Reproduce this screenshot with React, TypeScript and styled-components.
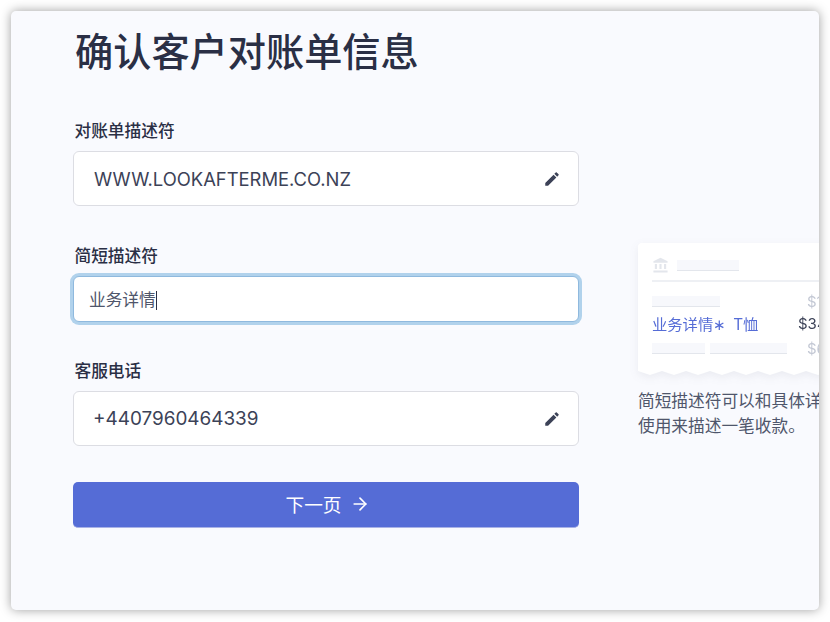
import React from 'react';
import styled, {createGlobalStyle} from 'styled-components';
import {MdAccountBalance, MdEdit} from 'react-icons/md';
import {ArrowRight} from 'lucide-react';

const FONT = `Inter, "Noto Sans CJK SC", sans-serif`;

const GlobalStyle = createGlobalStyle`
  html, body {
    margin: 0;
    padding: 0;
    background: #fff;
  }
  * {
    box-sizing: border-box;
  }
`;

const Page = styled.div`
  width: 830px;
  height: 622px;
  padding: 11px 11px 12px 11px;
  font-family: ${FONT};
  overflow: hidden;
`;

const Window = styled.main`
  width: 808px;
  height: 599px;
  border-radius: 5px;
  background: #f9fafe;
  box-shadow: 0 0 11px rgba(0, 0, 0, 0.38);
  display: flex;
  gap: 59px;
  padding-left: 62px;
  overflow: hidden;
`;

const FormColumn = styled.section`
  width: 506px;
  flex-shrink: 0;
  display: flex;
  flex-direction: column;
`;

const Title = styled.h1`
  margin: 16px 0 0 2px;
  height: 50px;
  font-size: 38.2px;
  line-height: 50px;
  font-weight: 500;
  color: #2a2f45;
`;

const Field = styled.div<{$gap: number}>`
  margin-top: ${p => p.$gap}px;
  display: flex;
  flex-direction: column;
`;

const Label = styled.label`
  height: 24px;
  margin-left: 1.5px;
  margin-bottom: 8px;
  font-size: 16.7px;
  line-height: 24px;
  font-weight: 500;
  color: #2a2f45;
`;

const InputBox = styled.div`
  height: 55px;
  background: #fff;
  border-radius: 6px;
  border: 1px solid #dcdde3;
  display: flex;
  align-items: center;
  justify-content: space-between;
  padding: 0 17px 0 20px;
  color: #3c4257;
`;

const FocusedInputBox = styled.div`
  height: 46px;
  background: #fff;
  border-radius: 6px;
  border: 1px solid #8fb9de;
  box-shadow: 0 0 0 3px #b1d2ec;
  display: flex;
  align-items: center;
  padding: 0 15px;
  font-size: 16.7px;
  color: #4f566b;
`;

const InputText = styled.span<{$size: number; $shift?: number}>`
  font-size: ${p => p.$size}px;
  margin-left: ${p => p.$shift ?? 0}px;
`;

const Caret = styled.span`
  display: inline-block;
  width: 1px;
  height: 19px;
  background: #2a2f45;
  vertical-align: -4px;
`;

const NextButton = styled.button`
  margin-top: 36px;
  height: 46px;
  border: 0;
  border-bottom: 1px solid #a9b2e6;
  border-radius: 5px;
  padding: 0 0 2px 3px;
  background: #556cd6;
  color: #fff;
  font-family: ${FONT};
  font-size: 18.7px;
  display: flex;
  align-items: center;
  justify-content: center;
  gap: 8px;
`;

const Aside = styled.aside`
  width: 300px;
  flex-shrink: 0;
  padding-top: 232px;
`;

const Receipt = styled.div`
  width: 100%;
  filter: drop-shadow(0 3px 4px rgba(60, 66, 87, 0.08));
`;

const ReceiptBody = styled.div`
  background: #fff;
  border-radius: 4px 4px 0 0;
  padding: 14px;
  height: 126px;
`;

const BankRow = styled.div`
  display: flex;
  align-items: center;
  gap: 8px;
  height: 17px;
  color: #e3e6ec;
`;

const Divider = styled.div`
  height: 2px;
  background: #eef0f4;
  margin: 6px 0 9px;
`;

const Row = styled.div<{$height: number}>`
  display: flex;
  align-items: center;
  height: ${p => p.$height}px;
`;

const Placeholder = styled.div<{$width: number}>`
  width: ${p => p.$width}px;
  height: 11px;
  background: #f7f8fc;
  border-bottom: 1px solid #e3e6ec;
  margin-right: 5px;
`;

const RowLeft = styled.div`
  width: 155px;
  display: flex;
  flex-shrink: 0;
`;

const Amount = styled.span<{$dark?: boolean}>`
  font-size: 15px;
  color: ${p => (p.$dark ? '#3c4257' : '#c3c8d4')};
`;

const Statement = styled.span`
  width: 146px;
  flex-shrink: 0;
  font-size: 15.3px;
  color: #556cd6;
  white-space: pre;
`;

const StatementItem = styled.span`
  margin-left: 7px;
`;

const Wave = styled.svg`
  display: block;
  width: 100%;
  height: 7px;
`;

const Hint = styled.p`
  margin: 13px 0 0;
  width: 300px;
  font-size: 16.7px;
  line-height: 25px;
  color: #4f566b;
`;

const wavePath = (() => {
  let d = 'M0 0V2';
  for (let x = 0; x < 300; x += 24) {
    d += `L${x + 12} 6L${x + 24} 2`;
  }
  return `${d}V0Z`;
})();

export default function App() {
  return (
    <Page>
      <GlobalStyle />
      <Window>
        <FormColumn>
          <Title>确认客户对账单信息</Title>
          <Field $gap={42}>
            <Label>对账单描述符</Label>
            <InputBox>
              <InputText $size={18.4}>WWW.LOOKAFTERME.CO.NZ</InputText>
              <MdEdit size={18} color="#3c4257" />
            </InputBox>
          </Field>
          <Field $gap={38}>
            <Label>简短描述符</Label>
            <FocusedInputBox>
              <span>
                业务详情
                <Caret />
              </span>
            </FocusedInputBox>
          </Field>
          <Field $gap={37}>
            <Label>客服电话</Label>
            <InputBox>
              <InputText $size={18.9} $shift={-1}>
                +4407960464339
              </InputText>
              <MdEdit size={18} color="#3c4257" />
            </InputBox>
          </Field>
          <NextButton>
            下一页
            <ArrowRight size={20} strokeWidth={2} />
          </NextButton>
        </FormColumn>
        <Aside>
          <Receipt>
            <ReceiptBody>
              <BankRow>
                <MdAccountBalance size={17} />
                <Placeholder $width={62} />
              </BankRow>
              <Divider />
              <Row $height={20}>
                <RowLeft>
                  <Placeholder $width={68} />
                </RowLeft>
                <Amount>$12.00</Amount>
              </Row>
              <Row $height={24}>
                <Statement>
                  业务详情∗<StatementItem>T恤</StatementItem>
                </Statement>
                <Amount $dark>$34.00</Amount>
              </Row>
              <Row $height={26}>
                <RowLeft>
                  <Placeholder $width={53} />
                  <Placeholder $width={77} />
                </RowLeft>
                <Amount>$6.00</Amount>
              </Row>
            </ReceiptBody>
            <Wave viewBox="0 0 300 7" preserveAspectRatio="none">
              <path d={wavePath} fill="#fff" />
            </Wave>
          </Receipt>
          <Hint>
            简短描述符可以和具体详情一起
            <br />
            使用来描述一笔收款。
          </Hint>
        </Aside>
      </Window>
    </Page>
  );
}
